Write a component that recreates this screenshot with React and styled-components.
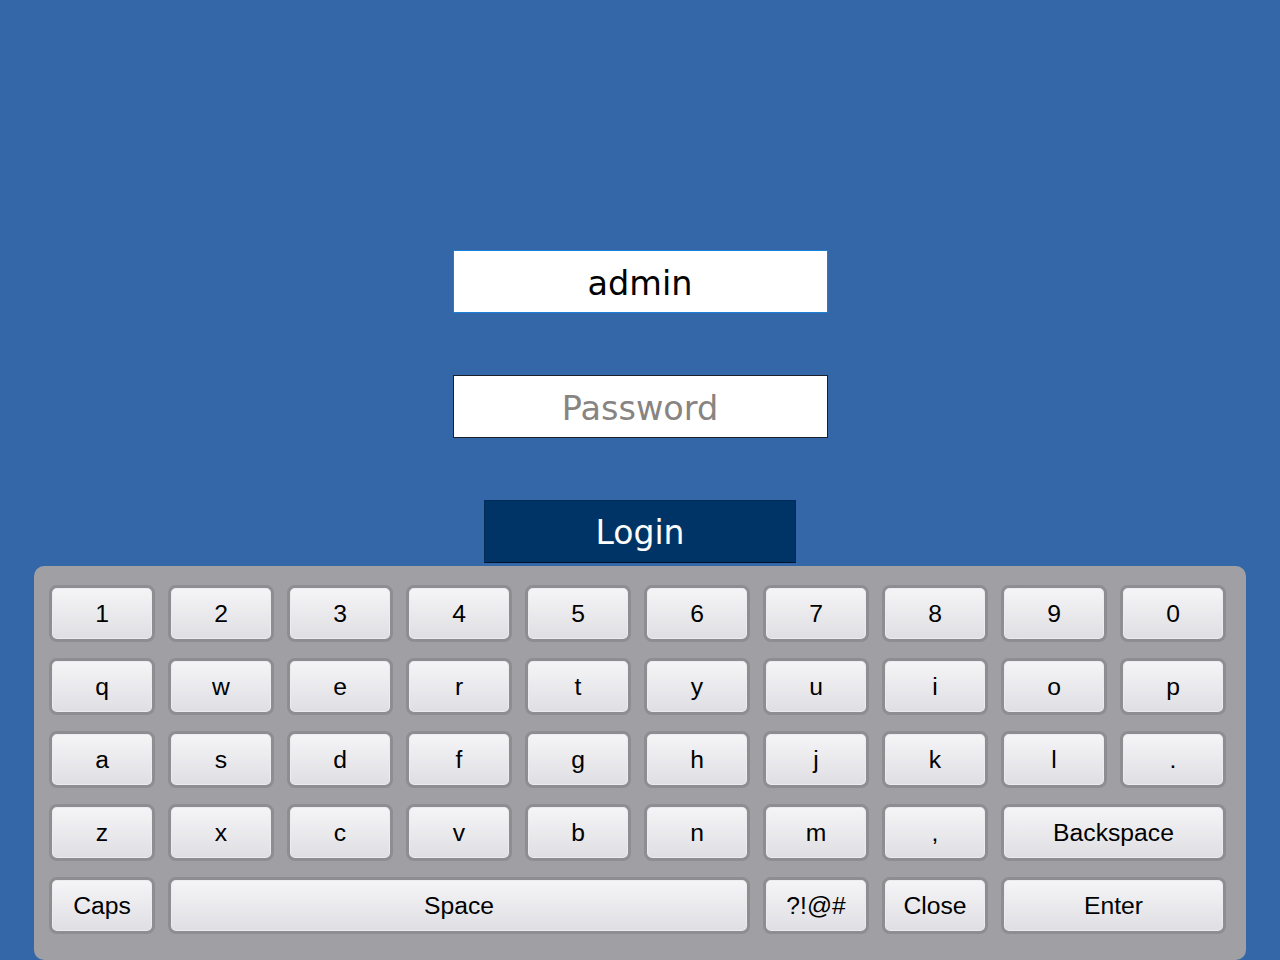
import styled, { createGlobalStyle } from 'styled-components';

const GlobalStyle = createGlobalStyle`
    html, body {
        margin: 0;
        padding: 0;
        background: #3467a8;
        height: 100%;
        overflow: hidden;
    }
`;

const Page = styled.div`
    width: 1280px;
    height: 960px;
    background: #3467a8;
    display: flex;
    flex-direction: column;
    align-items: center;
    padding-top: 250px;
    box-sizing: border-box;
    font-family: "DejaVu Sans", Verdana, sans-serif;
`;

const Field = styled.input`
    width: 375px;
    height: 63px;
    box-sizing: border-box;
    border: 1px solid ${(props) => (props.$focused ? '#1a7fd6' : '#1b1f2a')};
    background: #fff;
    outline: none;
    text-align: center;
    font-family: "DejaVu Sans", Verdana, sans-serif;
    font-size: 33.5px;
    color: #000;
    padding: 4px 0 0;
    margin-bottom: ${(props) => props.$gap}px;

    &::placeholder {
        color: #878482;
    }
`;

const LoginButton = styled.button`
    width: 312px;
    height: 63px;
    box-sizing: border-box;
    background: #003466;
    border: 1px solid #002a57;
    border-bottom-color: #00152d;
    color: #fff;
    font-family: "DejaVu Sans", Verdana, sans-serif;
    font-size: 33px;
    padding: 2px 0 0;
`;

const Keyboard = styled.div`
    margin-top: 3px;
    width: 1212px;
    height: 394px;
    box-sizing: border-box;
    background: #a09fa4;
    border-radius: 10px;
    padding: 19px 20px 0 15px;
    display: grid;
    grid-template-columns: repeat(10, 106px);
    grid-auto-rows: 57px;
    column-gap: 13px;
    row-gap: 16px;
`;

const Key = styled.button`
    grid-column: span ${(props) => props.$span || 1};
    box-sizing: border-box;
    border: 3px solid #8e8d92;
    border-radius: 8px;
    background: linear-gradient(#f5f5f8, #dfdfe3);
    box-shadow: inset 0 0 0 1px #ececf0;
    font-family: "Liberation Sans", Arial, sans-serif;
    font-size: 24.7px;
    color: #000;
    padding: 1px 0 0;
    display: flex;
    align-items: center;
    justify-content: center;
`;

const rows = [
    ['1', '2', '3', '4', '5', '6', '7', '8', '9', '0'],
    ['q', 'w', 'e', 'r', 't', 'y', 'u', 'i', 'o', 'p'],
    ['a', 's', 'd', 'f', 'g', 'h', 'j', 'k', 'l', '.'],
    ['z', 'x', 'c', 'v', 'b', 'n', 'm', ',', ['Backspace', 2]],
    [['Caps', 1], ['Space', 5], ['?!@#', 1], ['Close', 1], ['Enter', 2]],
];

export default function App() {
    return (
        <>
            <GlobalStyle />
            <Page>
                <Field $focused $gap={62} defaultValue="admin" />
                <Field $gap={62} type="password" placeholder="Password" />
                <LoginButton>Login</LoginButton>
                <Keyboard>
                    {rows.flat().map((k, i) => {
                        const [label, span] = Array.isArray(k) ? k : [k, 1];
                        return (
                            <Key key={i} $span={span}>
                                {label}
                            </Key>
                        );
                    })}
                </Keyboard>
            </Page>
        </>
    );
}
